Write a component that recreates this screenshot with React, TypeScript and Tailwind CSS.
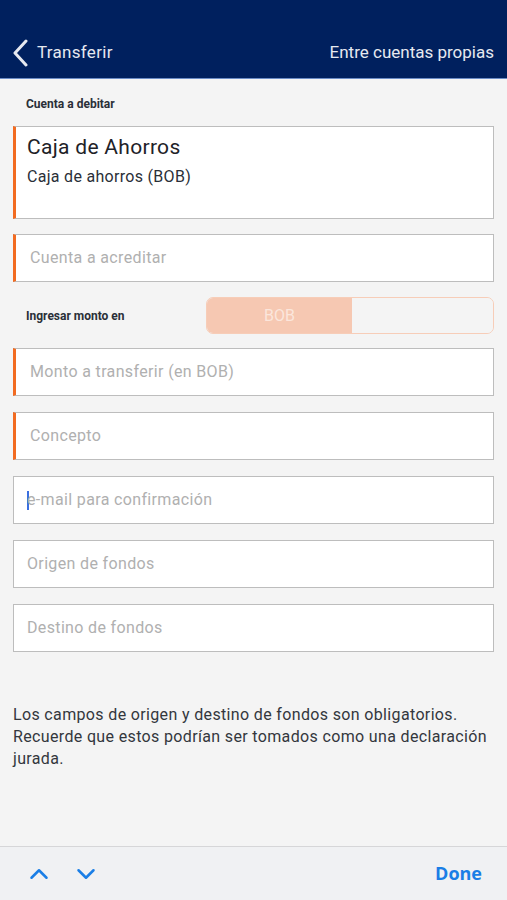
import { ChevronUp, ChevronDown } from 'lucide-react';

const font = { fontFamily: 'Roboto, "Open Sans", sans-serif' };

function Field({ label, accent }: { label: string; accent?: boolean }) {
    return (
        <div
            className={`h-[48px] flex items-center bg-white border-[1.5px] border-[#bdbdbd] ${accent ? 'border-l-[3px] border-l-[#f26b21] pl-[14px]' : 'pl-[13px]'}`}
        >
            <span className="text-[16px] tracking-[0.35px] text-[#b0b0b0]">{label}</span>
        </div>
    );
}

export default function App() {
    return (
        <div className="w-[507px] h-[900px] flex flex-col bg-[#f4f4f4]" style={font}>
            <header className="h-[79px] bg-[#00205e] border-b border-[#6b8cc6] flex items-end pb-[11px] px-[12px]">
                <div className="flex items-center flex-1 text-[#e6e9f0]">
                    <svg width="18" height="28" viewBox="0 0 18 28" fill="none" className="mr-[7px]">
                        <polyline points="14,2 3,14 14,26" stroke="currentColor" strokeWidth="3" strokeLinecap="round" strokeLinejoin="round" />
                    </svg>
                    <span className="text-[17px] tracking-[0.3px]">Transferir</span>
                </div>
                <span className="text-[17px] text-[#e6e9f0] mr-[1px] mb-[2px]">Entre cuentas propias</span>
            </header>

            <main className="flex-1 px-[13px]">
                <p className="text-[12px] font-bold text-[#2a2f38] ml-[13px] mt-[16px]">Cuenta a debitar</p>

                <div className="mt-[13px] h-[93px] bg-white border-[1.5px] border-[#bdbdbd] border-l-[3px] border-l-[#f26b21] pl-[11px] pt-[6px]">
                    <p className="text-[21px] tracking-[0.3px] text-[#1e2228] leading-[28px]">Caja de Ahorros</p>
                    <p className="text-[16px] tracking-[0.3px] text-[#2a2f38] mt-[4px]">Caja de ahorros (BOB)</p>
                </div>

                <div className="mt-[15px]">
                    <Field label="Cuenta a acreditar" accent />
                </div>

                <div className="mt-[15px] flex items-center h-[37px]">
                    <span className="text-[12px] font-bold text-[#2a2f38] ml-[13px] w-[180px]">Ingresar monto en</span>
                    <div className="flex-1 h-full flex rounded-[7px] border border-[#f7cdb8] overflow-hidden">
                        <div className="w-[145px] bg-[#f6c8b2] flex items-center justify-center text-[16px] text-[#fbe6dc]">
                            BOB
                        </div>
                        <div className="flex-1 bg-[#f4f4f4]" />
                    </div>
                </div>

                <div className="mt-[14px] flex flex-col gap-[16px]">
                    <Field label="Monto a transferir (en BOB)" accent />
                    <Field label="Concepto" accent />
                    <div className="h-[48px] flex items-center bg-white border-[1.5px] border-[#bdbdbd] pl-[13px]">
                        <span className="w-[2px] h-[19px] bg-[#3a6fe0] -mr-[2px]" />
                        <span className="text-[16px] tracking-[0.35px] text-[#b0b0b0]">e-mail para confirmación</span>
                    </div>
                    <Field label="Origen de fondos" />
                    <Field label="Destino de fondos" />
                </div>

                <p className="mt-[52px] text-[16px] tracking-[0.35px] leading-[22px] text-[#33373d] pr-[4px]">
                    Los campos de origen y destino de fondos son obligatorios. Recuerde que estos podrían ser tomados como una declaración jurada.
                </p>
            </main>

            <footer className="h-[54px] bg-[#f0f1f3] border-t border-[#d6d6d8] flex items-center px-[24px]">
                <ChevronUp className="w-[30px] h-[30px] text-[#1a7ee6]" strokeWidth={2} />
                <ChevronDown className="w-[30px] h-[30px] text-[#1a7ee6] ml-[17px]" strokeWidth={2} />
                <span className="ml-auto mr-[1px] text-[18px] font-bold text-[#1a7ee6]" style={{ fontFamily: '"Open Sans", sans-serif' }}>Done</span>
            </footer>
        </div>
    );
}
